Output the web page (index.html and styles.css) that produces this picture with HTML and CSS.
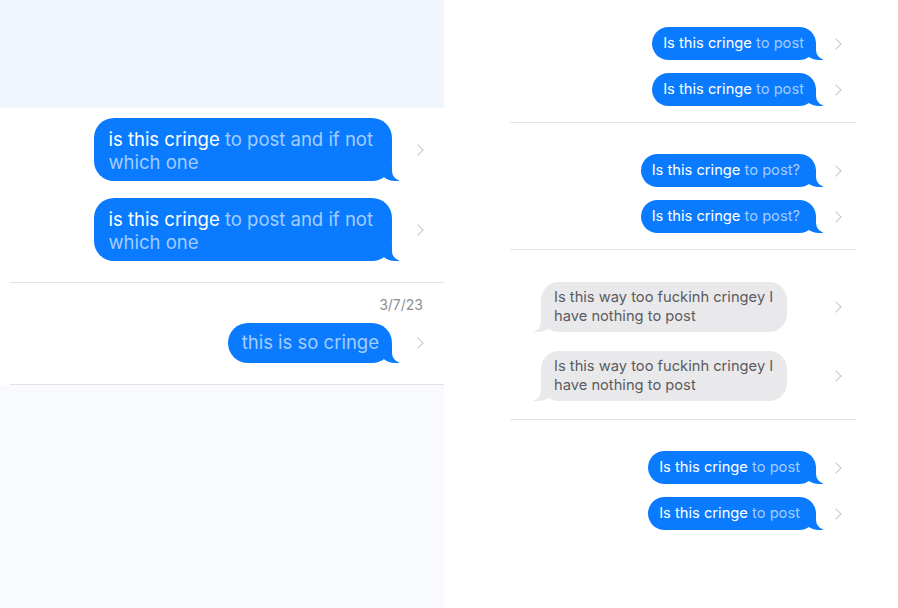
FILE: index.html
```html
<!DOCTYPE html>
<html>
<head>
<meta charset="utf-8">
<link rel="stylesheet" href="styles.css">
</head>
<body>
<div class="page">
  <section class="left">
    <div class="left-top"></div>
    <div class="left-chat">
      <div class="row lrow first">
        <div class="bubble big"><span class="sent">is this cringe</span> <span class="fade">to post and if not<br>which one</span></div>
        <div class="chev-slot big-slot"><span class="chev"></span></div>
      </div>
      <div class="row lrow second">
        <div class="bubble big"><span class="sent">is this cringe</span> <span class="fade">to post and if not<br>which one</span></div>
        <div class="chev-slot big-slot"><span class="chev"></span></div>
      </div>
      <div class="sep lsep"></div>
      <div class="date">3/7/23</div>
      <div class="row lrow third">
        <div class="bubble big single"><span class="fade">this is so cringe</span></div>
        <div class="chev-slot big-slot"><span class="chev"></span></div>
      </div>
      <div class="sep lsep sep-bottom"></div>
    </div>
    <div class="left-bottom"></div>
  </section>
  <section class="right">
    <div class="right-col">
      <div class="row rrow r1">
        <div class="bubble small"><span class="sent">Is this cringe</span> <span class="fade">to post</span></div>
        <div class="chev-slot small-slot"><span class="chev"></span></div>
      </div>
      <div class="row rrow r2">
        <div class="bubble small"><span class="sent">Is this cringe</span> <span class="fade">to post</span></div>
        <div class="chev-slot small-slot"><span class="chev"></span></div>
      </div>
      <div class="sep rsep s1"></div>
      <div class="row rrow r3">
        <div class="bubble small wide"><span class="sent">Is this cringe</span> <span class="fade">to post?</span></div>
        <div class="chev-slot small-slot"><span class="chev"></span></div>
      </div>
      <div class="row rrow r4">
        <div class="bubble small wide"><span class="sent">Is this cringe</span> <span class="fade">to post?</span></div>
        <div class="chev-slot small-slot"><span class="chev"></span></div>
      </div>
      <div class="sep rsep s2"></div>
      <div class="row grow g1">
        <div class="bubble grey">Is this way too fuckinh cringey I<br>have nothing to post</div>
        <div class="chev-slot small-slot"><span class="chev"></span></div>
      </div>
      <div class="row grow g2">
        <div class="bubble grey">Is this way too fuckinh cringey I<br>have nothing to post</div>
        <div class="chev-slot small-slot"><span class="chev"></span></div>
      </div>
      <div class="sep rsep s3"></div>
      <div class="row rrow r5">
        <div class="bubble small wide"><span class="sent">Is this cringe</span> <span class="fade">to post</span></div>
        <div class="chev-slot small-slot"><span class="chev"></span></div>
      </div>
      <div class="row rrow r6">
        <div class="bubble small wide"><span class="sent">Is this cringe</span> <span class="fade">to post</span></div>
        <div class="chev-slot small-slot"><span class="chev"></span></div>
      </div>
    </div>
  </section>
</div>
</body>
</html>
```
FILE: styles.css
```css
* { box-sizing: border-box; }
html, body { margin: 0; padding: 0; }
body {
  width: 898px;
  height: 608px;
  overflow: hidden;
  background: #ffffff;
  font-family: "Inter", "Roboto", "Liberation Sans", sans-serif;
}
.page {
  display: flex;
  width: 898px;
  height: 608px;
}
.left {
  width: 444px;
  display: flex;
  flex-direction: column;
}
.left-top {
  height: 108px;
  background: #f1f6fe;
}
.left-chat {
  background: #ffffff;
  padding-top: 10px;
}
.left-bottom {
  flex: 1;
  background: #f8fafe;
}
.row {
  display: flex;
  justify-content: flex-end;
  align-items: center;
}
.second { margin-top: 17px; }
.bubble {
  position: relative;
  background: #0a7bff;
  border-radius: 18px;
}
.bubble::before {
  content: "";
  position: absolute;
  bottom: 0;
  right: -7px;
  width: 20px;
  height: 18px;
  background: #0a7bff;
  border-bottom-left-radius: 16px 14px;
}
.bubble::after {
  content: "";
  position: absolute;
  bottom: 0;
  right: -26px;
  width: 26px;
  height: 18px;
  background: #ffffff;
  border-bottom-left-radius: 10px;
}
.bubble.big {
  font-size: 18.5px;
  line-height: 23px;
  padding: 10px 19px 7px 14px;
  border-radius: 20px;
}
.bubble.big.single {
  padding: 8px 13px 9px 14px;
}
.sent { color: #ffffff; }
.fade { color: #a3cdff; }
.chev-slot {
  display: flex;
  align-items: center;
}
.big-slot { width: 52px; padding-left: 22px; }
.small-slot { width: 40px; padding-left: 16px; }
.chev {
  display: block;
  width: 8px;
  height: 8px;
  border-top: 1.7px solid #c7c7cc;
  border-right: 1.7px solid #c7c7cc;
  transform: rotate(45deg);
}
.sep {
  height: 1px;
  background: #e2e2e6;
}
.lsep { margin: 21px 0 0 10px; }
.date {
  text-align: right;
  padding-right: 21px;
  margin-top: 13px;
  font-size: 14px;
  line-height: 17px;
  color: #8e8e93;
}
.third { margin-top: 10px; }
.sep-bottom { margin-top: 21px; }

.right {
  flex: 1;
  background: #ffffff;
}
.right-col {
  margin-left: 66px;
  width: 346px;
  padding-top: 27px;
}
.bubble.small {
  font-size: 14.7px;
  line-height: 19px;
  padding: 7px 12px 7px 11px;
  border-radius: 17px;
}
.bubble.small.wide {
  padding-right: 16px;
}
.r2, .r4, .r6 { margin-top: 13px; }
.rsep { margin-top: 16px; }
.r3 { margin-top: 31px; }
.r5 { margin-top: 31px; }
.grow { justify-content: space-between; }
.g1 { margin-top: 32px; }
.g2 { margin-top: 19px; }
.bubble.grey {
  margin-left: 31px;
  background: #e9e9eb;
  color: #5b5b60;
  font-size: 14.7px;
  line-height: 19px;
  padding: 6px 14px 6px 13px;
  border-radius: 18px;
}
.bubble.grey::before {
  right: auto;
  left: -7px;
  background: #e9e9eb;
  border-bottom-left-radius: 0;
  border-bottom-right-radius: 16px 14px;
}
.bubble.grey::after {
  right: auto;
  left: -26px;
  border-bottom-left-radius: 0;
  border-bottom-right-radius: 10px;
}
.s3 { margin-top: 18px; }
```
